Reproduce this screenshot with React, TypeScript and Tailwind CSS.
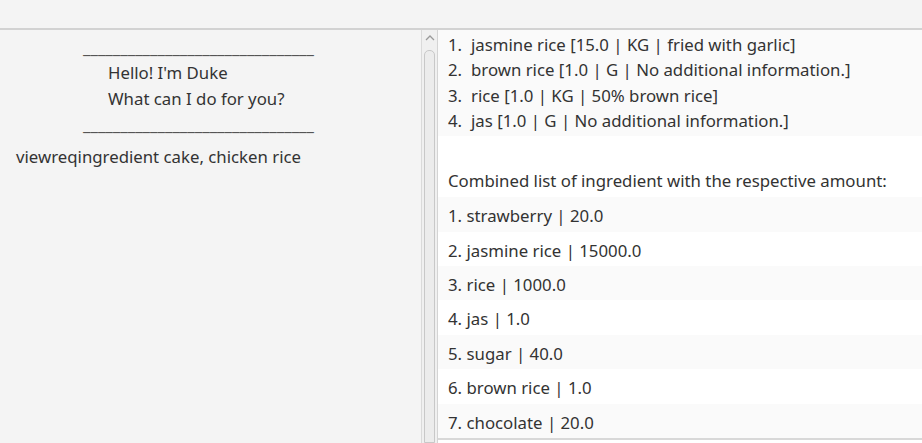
import React from "react";

const RECIPE_LINES = [
  "jasmine rice [15.0 | KG | fried with garlic]",
  "brown rice [1.0 | G | No additional information.]",
  "rice [1.0 | KG | 50% brown rice]",
  "jas [1.0 | G | No additional information.]",
];

const COMBINED = [
  "strawberry | 20.0",
  "jasmine rice | 15000.0",
  "rice | 1000.0",
  "jas | 1.0",
  "sugar | 40.0",
  "brown rice | 1.0",
  "chocolate | 20.0",
];

const DASHES = "_______________________________";

export default function App() {
  return (
    <div
      className="flex h-[443px] w-[922px] flex-col overflow-hidden bg-[#f4f4f4] text-[16.8px] text-[#333333]"
      style={{ fontFamily: '"Noto Sans", "Open Sans", sans-serif' }}
    >
      <div className="h-[30px] shrink-0 border-b-2 border-[#d2d2d2] bg-[#f4f4f4]" />

      <div className="flex min-h-0 flex-1">
        {/* chat side */}
        <div className="w-[422px] shrink-0 border-r border-[#dadada] pt-[8px]">
          <div className="pl-[83px] leading-[20px] text-[#555555]">{DASHES}</div>
          <div className="mt-[2px] pl-[108px] leading-[26px]">
            <div>Hello! I'm Duke</div>
            <div>What can I do for you?</div>
          </div>
          <div className="mt-[3px] pl-[83px] leading-[20px] text-[#555555]">{DASHES}</div>
          <div className="mt-[11px] pl-[16px] leading-[22px]">
            viewreqingredient cake, chicken rice
          </div>
        </div>

        {/* scrollbar */}
        <div className="flex w-[15px] shrink-0 flex-col items-center bg-[#f0f0f0] pt-[3px]">
          <svg width="10" height="7" viewBox="0 0 10 7" className="mt-[1px]">
            <path d="M1 6 L5 2 L9 6" fill="none" stroke="#9a9a9a" strokeWidth="1.3" />
          </svg>
          <div className="mt-[9px] w-[11px] flex-1 rounded-t-[5px] border border-[#c8c8c8] bg-[#ececec]" />
        </div>

        {/* output side */}
        <div className="flex min-w-0 flex-1 flex-col border-l border-[#d4d4d4] bg-white">
          <div className="bg-[#fafafa] pb-[3px] pl-[10px] pt-[2px] leading-[25.3px]">
            {RECIPE_LINES.map((line, i) => (
              <div key={i} className="flex">
                <span className="w-[23px]">{i + 1}.</span>
                <span>{line}</span>
              </div>
            ))}
          </div>
          <div className="h-[29px] bg-white" />
          <div className="pl-[10px] leading-[32px]">
            Combined list of ingredient with the respective amount:
          </div>
          <div className="border-b-2 border-[#d8d8d8]">
            {COMBINED.map((item, i) => (
              <div
                key={i}
                className={
                  "flex h-[34.4px] items-center pl-[10px] pt-[3px] " +
                  (i % 2 === 0 ? "bg-[#fafafa]" : "bg-white")
                }
              >
                {i + 1}. {item}
              </div>
            ))}
          </div>
        </div>
      </div>
    </div>
  );
}
